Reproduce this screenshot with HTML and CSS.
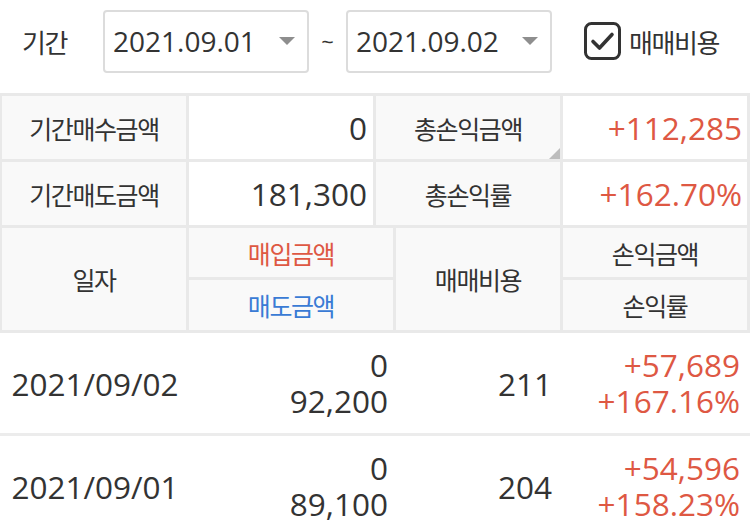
FILE: index.html
```html
<!DOCTYPE html>
<html lang="ko">
<head>
<meta charset="utf-8">
<link rel="stylesheet" href="styles.css">
</head>
<body>
<div class="filter">
  <span class="ko filter-label">기간</span>
  <div class="select"><span class="num">2021.09.01</span><span class="caret"></span></div>
  <span class="tilde">~</span>
  <div class="select"><span class="num">2021.09.02</span><span class="caret"></span></div>
  <label class="check">
    <svg class="box" width="37" height="38" viewBox="0 0 37 38"><rect x="1.5" y="1.5" width="34" height="35" rx="6" fill="none" stroke="#333" stroke-width="3"/><path d="M9 19.5 L15.5 26 L28 12.5" fill="none" stroke="#333" stroke-width="3.6" stroke-linecap="round" stroke-linejoin="round"/></svg>
    <span class="ko">매매비용</span>
  </label>
</div>
<div class="table">
  <div class="summary">
    <div class="cell label ko">기간매수금액</div>
    <div class="cell value num">0</div>
    <div class="cell label ko corner">총손익금액</div>
    <div class="cell value num red">+112,285</div>
    <div class="cell label ko">기간매도금액</div>
    <div class="cell value num">181,300</div>
    <div class="cell label ko">총손익률</div>
    <div class="cell value num red">+162.70%</div>
  </div>
  <div class="head">
    <div class="hcell span ko">일자</div>
    <div class="hcell ko red">매입금액</div>
    <div class="hcell span ko">매매비용</div>
    <div class="hcell ko">손익금액</div>
    <div class="hcell ko blue">매도금액</div>
    <div class="hcell ko">손익률</div>
  </div>
</div>
<div class="rows">
  <div class="row">
    <div class="date num">2021/09/02</div>
    <div class="amt num"><span>0</span><span>92,200</span></div>
    <div class="fee num">211</div>
    <div class="amt pl num red"><span>+57,689</span><span>+167.16%</span></div>
  </div>
  <div class="row">
    <div class="date num">2021/09/01</div>
    <div class="amt num"><span>0</span><span>89,100</span></div>
    <div class="fee num">204</div>
    <div class="amt pl num red"><span>+54,596</span><span>+158.23%</span></div>
  </div>
</div>
</body>
</html>
```
FILE: styles.css
```css
* { box-sizing: border-box; }
html, body { margin: 0; padding: 0; background: #fff; }
body {
  font-family: "Open Sans", "Noto Sans CJK KR", sans-serif;
  color: #333;
  width: 750px;
  height: 526px;
  overflow: hidden;
}
.ko { font-family: "Noto Sans CJK KR", sans-serif; font-size: 25px; letter-spacing: -1.4px; }
.num { font-family: "Open Sans", sans-serif; font-size: 31.5px; }
.red { color: #de5843; }
.blue { color: #3a7bd5; }

.filter {
  height: 93px;
  display: flex;
  align-items: center;
  padding-left: 22px;
  padding-bottom: 11px;
}
.filter-label { width: 81px; font-size: 26px; }
.select {
  width: 206px;
  height: 63px;
  border: 2px solid #dcdcdc;
  border-radius: 4px;
  display: flex;
  align-items: center;
  justify-content: space-between;
  padding: 0 8px 0 8px;
}
.select .num { font-size: 28px; }
.caret {
  width: 0; height: 0;
  border-left: 8px solid transparent;
  border-right: 8px solid transparent;
  border-top: 8px solid #8e8e8e;
  margin-right: 4px;
}
.tilde { width: 37px; text-align: center; font-size: 22px; }
.check {
  display: flex;
  align-items: center;
  gap: 8px;
  margin-left: 32px;
}
.check .ko { font-size: 26px; }

.table {
  background: #e9e9e9;
  padding: 3px 3px 3px 2px;
  display: flex;
  flex-direction: column;
  gap: 3px;
}
.summary {
  display: grid;
  grid-template-columns: 184px 184px 184px 184px;
  grid-auto-rows: 63px;
  gap: 3px;
}
.cell { display: flex; align-items: center; }
.label { background: #f9f9f9; justify-content: center; }
.value { background: #fff; justify-content: flex-end; padding-right: 6px; }
.summary .value:nth-child(4n) { padding-right: 5px; }
.corner { position: relative; }
.corner::after {
  content: "";
  position: absolute;
  right: 0; bottom: 0;
  width: 0; height: 0;
  border-left: 11px solid transparent;
  border-bottom: 11px solid #bdbdbd;
}
.head {
  display: grid;
  grid-template-columns: 184px 204px 164px 184px;
  grid-template-rows: 49px 50px;
  gap: 3px;
}
.hcell {
  background: #f9f9f9;
  display: flex;
  align-items: center;
  justify-content: center;
}
.hcell.span { grid-row: span 2; }

.row {
  height: 103px;
  border-bottom: 3px solid #ececec;
  display: grid;
  grid-template-columns: 186px 207px 167px 187px;
  padding-left: 2px;
  align-items: center;
}
.date { text-align: center; }
.amt {
  display: flex;
  flex-direction: column;
  align-items: flex-end;
  line-height: 36px;
  padding-right: 7px;
}
.fee { text-align: right; padding-right: 10px; }
.pl { padding-right: 9px; }
```
